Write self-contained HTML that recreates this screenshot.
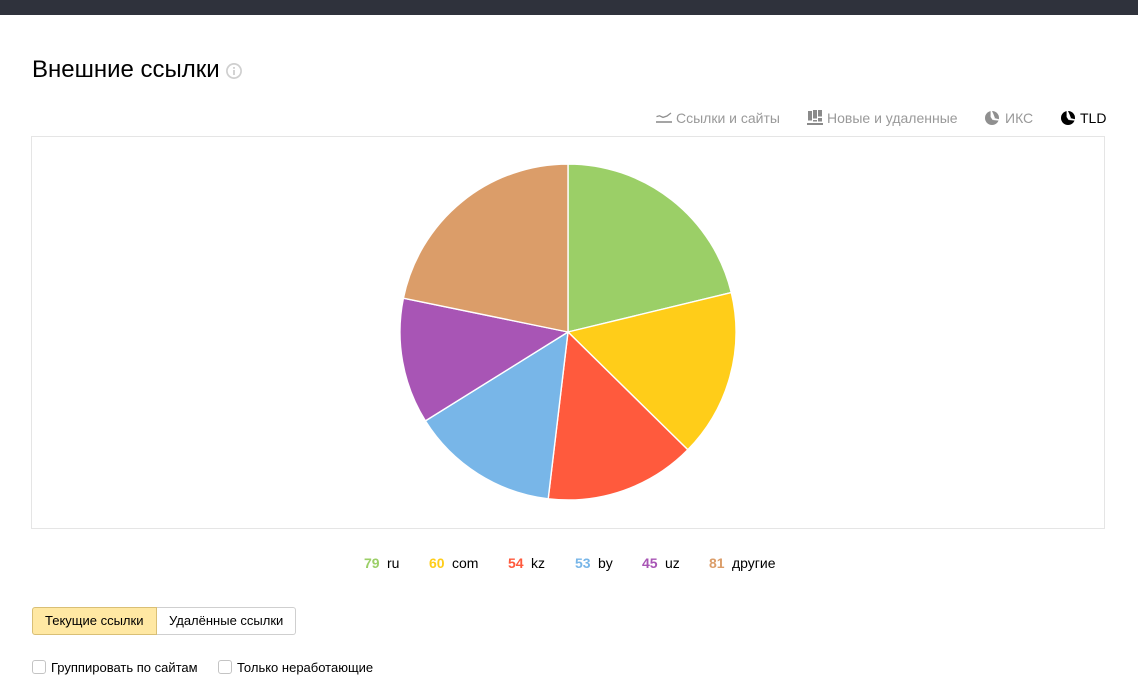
<!DOCTYPE html>
<html lang="ru">
<head>
<meta charset="utf-8">
<title>Внешние ссылки</title>
<style>
html,body{margin:0;padding:0;background:#fff;}
body{width:1138px;height:687px;overflow:hidden;position:relative;font-family:"Liberation Sans",Arial,sans-serif;color:#000;}
.t{position:absolute;white-space:nowrap;}
.box{position:absolute;box-sizing:border-box;}
svg{position:absolute;overflow:visible;}
</style>
</head>
<body>
<div class="box" style="left:0;top:0;width:1138px;height:15px;background:#2f323c;"></div>

<div class="t" style="left:32px;top:55px;font-size:24px;line-height:30px;">Внешние ссылки</div>
<svg style="left:226px;top:63px" width="16" height="16" viewBox="0 0 16 16">
  <circle cx="8" cy="8" r="7.1" fill="none" stroke="#cfcfcf" stroke-width="1.7"/>
  <rect x="7.2" y="7" width="1.6" height="5" fill="#c8c8c8"/>
  <rect x="7.2" y="4" width="1.6" height="1.8" fill="#c8c8c8"/>
</svg>

<svg style="left:656px;top:112px" width="16" height="12" viewBox="0 0 16 12">
  <path d="M0.5 4.6 L3.5 3.8 L7 5.4 L11 4 L15 1" fill="none" stroke="#8f8f8f" stroke-width="1.3"/>
  <rect x="0" y="9.2" width="16" height="1.6" fill="#8f8f8f"/>
</svg>
<div class="t" style="left:676px;top:110px;font-size:14px;line-height:16px;color:#999;">Ссылки и сайты</div>

<svg style="left:807px;top:110px" width="16" height="15" viewBox="0 0 16 15" fill="#8a8a8a">
  <rect x="1" y="1" width="4" height="9.5"/>
  <rect x="6" y="0" width="4" height="8.5"/>
  <rect x="6" y="10" width="4" height="1.5"/>
  <rect x="11" y="0" width="4" height="6.5"/>
  <rect x="11" y="8" width="4" height="3.5"/>
  <rect x="0" y="13" width="16" height="2"/>
</svg>
<div class="t" style="left:827px;top:110px;font-size:14px;line-height:16px;color:#999;">Новые и удаленные</div>

<svg style="left:985px;top:111px" width="14" height="14" viewBox="0 0 14 14">
  <circle cx="7" cy="7" r="7" fill="#8f8f8f"/>
  <path d="M5.6 0 L5.6 6 L7.6 9 L10 7.2 L8.4 3 L7 0 Z" fill="#fff"/>
  <path d="M7.6 9 L14 9.6 L14 8.2 L10 7.2 Z" fill="#fff"/>
</svg>
<div class="t" style="left:1005px;top:110px;font-size:14px;line-height:16px;color:#999;">ИКС</div>

<svg style="left:1061px;top:111px" width="14" height="14" viewBox="0 0 14 14">
  <circle cx="7" cy="7" r="7" fill="#000"/>
  <path d="M5.6 0 L5.6 6 L7.6 9 L10 7.2 L8.4 3 L7 0 Z" fill="#fff"/>
  <path d="M7.6 9 L14 9.6 L14 8.2 L10 7.2 Z" fill="#fff"/>
</svg>
<div class="t" style="left:1080px;top:110px;font-size:14px;line-height:16px;color:#000;">TLD</div>

<div class="box" style="left:31px;top:136px;width:1074px;height:393px;border:1px solid #e5e5e5;"></div>

<svg style="left:0;top:0" width="1138" height="687" viewBox="0 0 1138 687">
  <g stroke="#fff" stroke-width="1.4" stroke-linejoin="round">
    <path d="M568 332 L568 164 A168 168 0 0 1 731.3 292.6 Z" fill="#9bcf67"/>
    <path d="M568 332 L731.3 292.6 A168 168 0 0 1 687.8 449.8 Z" fill="#ffcd19"/>
    <path d="M568 332 L687.8 449.8 A168 168 0 0 1 548.2 498.8 Z" fill="#ff5a3d"/>
    <path d="M568 332 L548.2 498.8 A168 168 0 0 1 425.4 420.9 Z" fill="#78b6e8"/>
    <path d="M568 332 L425.4 420.9 A168 168 0 0 1 403.4 298.2 Z" fill="#a855b5"/>
    <path d="M568 332 L403.4 298.2 A168 168 0 0 1 568 164 Z" fill="#db9d69"/>
  </g>
</svg>

<div class="t" style="left:364px;top:555px;font-size:14px;line-height:16px;font-weight:bold;color:#9bcf67;">79</div>
<div class="t" style="left:387px;top:555px;font-size:14px;line-height:16px;">ru</div>
<div class="t" style="left:429px;top:555px;font-size:14px;line-height:16px;font-weight:bold;color:#ffcd19;">60</div>
<div class="t" style="left:452px;top:555px;font-size:14px;line-height:16px;">com</div>
<div class="t" style="left:508px;top:555px;font-size:14px;line-height:16px;font-weight:bold;color:#ff5a3d;">54</div>
<div class="t" style="left:531px;top:555px;font-size:14px;line-height:16px;">kz</div>
<div class="t" style="left:575px;top:555px;font-size:14px;line-height:16px;font-weight:bold;color:#78b6e8;">53</div>
<div class="t" style="left:598px;top:555px;font-size:14px;line-height:16px;">by</div>
<div class="t" style="left:642px;top:555px;font-size:14px;line-height:16px;font-weight:bold;color:#a855b5;">45</div>
<div class="t" style="left:665px;top:555px;font-size:14px;line-height:16px;">uz</div>
<div class="t" style="left:709px;top:555px;font-size:14px;line-height:16px;font-weight:bold;color:#db9d69;">81</div>
<div class="t" style="left:732px;top:555px;font-size:14px;line-height:16px;">другие</div>

<div class="box" style="left:32px;top:607px;width:125px;height:28px;background:#ffe8a3;border:1px solid #d9bf75;border-radius:3px 0 0 3px;"></div>
<div class="t" style="left:45px;top:613px;font-size:13px;line-height:15px;">Текущие ссылки</div>
<div class="box" style="left:157px;top:607px;width:139px;height:28px;background:#fff;border:1px solid #cfcfcf;border-left:0;border-radius:0 3px 3px 0;"></div>
<div class="t" style="left:169px;top:613px;font-size:13px;line-height:15px;">Удалённые ссылки</div>

<div class="box" style="left:32px;top:660px;width:14px;height:14px;background:#fff;border:1px solid #c4c4c4;border-radius:3px;"></div>
<div class="t" style="left:51px;top:660px;font-size:13px;line-height:15px;">Группировать по сайтам</div>
<div class="box" style="left:218px;top:660px;width:14px;height:14px;background:#fff;border:1px solid #c4c4c4;border-radius:3px;"></div>
<div class="t" style="left:237px;top:660px;font-size:13px;line-height:15px;">Только неработающие</div>
</body>
</html>
